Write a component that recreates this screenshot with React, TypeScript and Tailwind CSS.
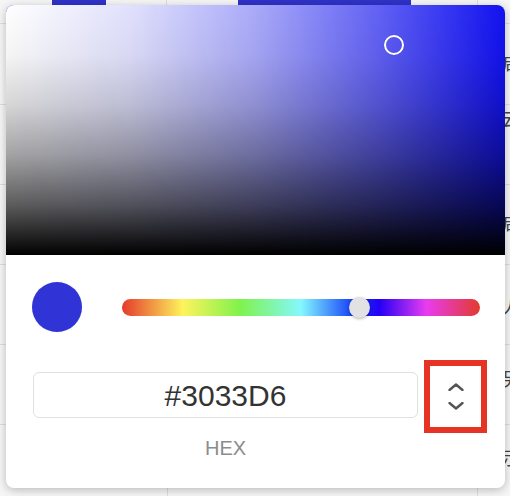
import React from "react";

const rightChars = [
  { top: 52, ch: "启" },
  { top: 108, ch: "云" },
  { top: 212, ch: "启" },
  { top: 296, ch: "人" },
  { top: 368, ch: "另" },
  { top: 447, ch: "示" },
];

export default function App() {
  return (
    <div
      className="relative w-[510px] h-[496px] overflow-hidden bg-[#f6f6f6]"
      style={{ fontFamily: '"Liberation Sans", Arial, "Noto Sans CJK SC", sans-serif' }}
    >
      {/* background spreadsheet */}
      <div className="absolute inset-0 flex flex-col">
        <div className="h-[24px] border-b border-[#dedede] flex">
          <div className="w-[52px]" />
          <div className="w-[54px] h-[6px] bg-[#2f32c6]" />
          <div className="w-[61px] border-r border-[#dedede]" />
          <div className="w-[71px]" />
          <div className="w-[173px] h-[6px] bg-[#2f32c6]" />
          <div className="w-[67px] border-r border-[#dedede]" />
        </div>
        <div className="h-[81px] border-b border-[#dedede]" />
        <div className="h-[80px] border-b border-[#dedede]" />
        <div className="h-[80px] border-b border-[#dedede]" />
        <div className="h-[80px] border-b border-[#dedede]" />
        <div className="h-[80px] border-b border-[#dedede]" />
        <div className="flex-1 flex">
          <div className="w-[168px] border-r border-[#dedede]" />
          <div className="w-[310px] border-r border-[#dedede]" />
        </div>
      </div>
      {rightChars.map((c) => (
        <span
          key={c.top}
          className="absolute left-[502px] text-[18px] leading-[24px] text-[#444]"
          style={{ top: c.top }}
        >
          {c.ch}
        </span>
      ))}

      {/* popup */}
      <div className="absolute left-[6px] top-[5px] w-[499px] h-[483px] bg-white rounded-[8px] shadow-[0_2px_10px_rgba(0,0,0,0.25)] overflow-hidden flex flex-col">
        {/* saturation */}
        <div className="relative h-[250px] bg-[#1212f0]">
          <div className="absolute inset-0 bg-[linear-gradient(to_right,rgba(255,255,255,1),rgba(255,255,255,0.87)_25%,rgba(255,255,255,0.64)_50%,rgba(255,255,255,0.33)_75%,rgba(255,255,255,0))]" />
          <div className="absolute inset-0 bg-[linear-gradient(to_top,rgba(0,0,0,1),rgba(0,0,0,0.64)_20%,rgba(0,0,0,0.36)_40%,rgba(0,0,0,0.16)_60%,rgba(0,0,0,0.04)_80%,rgba(0,0,0,0))]" />
          <div className="absolute left-[378px] top-[30px] w-[20px] h-[20px] rounded-full border-2 border-white shadow-[0_0_1px_rgba(0,0,0,0.4)]" />
        </div>

        {/* swatch + hue */}
        <div className="flex items-center h-[104px] pl-[26px] pr-[25px]">
          <div className="w-[50px] h-[50px] rounded-full bg-[#3033D6] shadow-[0_0_1px_rgba(0,0,0,0.2)]" />
          <div className="relative ml-[40px] flex-1 h-[17px] rounded-full bg-[linear-gradient(to_right,#e53a2c,#fdf45c_17%,#80f24c_33%,#84f8fe_50%,#0a2cf8_66%,#2600f5_72%,#e83cf0_85%,#e33a2d)]">
            <div className="absolute left-[227px] top-[-2px] w-[21px] h-[21px] rounded-full bg-[#e2e2e2] shadow-[0_1px_3px_rgba(0,0,0,0.3)]" />
          </div>
        </div>

        {/* hex input row */}
        <div className="flex items-start pl-[27px]">
          <div className="flex flex-col items-center mt-[13px]">
            <div className="w-[385px] h-[46px] border border-[#e0e0e0] rounded-[6px] flex items-center justify-center text-[30px] text-[#333]">
              #3033D6
            </div>
            <div className="mt-[18px] text-[20px] leading-[24px] text-[#8c8c8c]">HEX</div>
          </div>
          <div className="ml-[6px] mt-[1px] w-[63px] h-[73px] border-[6px] border-[#e53424] flex flex-col items-center justify-center gap-[11px]">
            <svg width="16" height="8" viewBox="0 0 16 8" fill="none">
              <path d="M1.5 7L8 1.5L14.5 7" stroke="#555" strokeWidth="2.4" strokeLinecap="round" strokeLinejoin="round" />
            </svg>
            <svg width="16" height="8" viewBox="0 0 16 8" fill="none">
              <path d="M1.5 1L8 6.5L14.5 1" stroke="#555" strokeWidth="2.4" strokeLinecap="round" strokeLinejoin="round" />
            </svg>
          </div>
        </div>
      </div>
    </div>
  );
}
